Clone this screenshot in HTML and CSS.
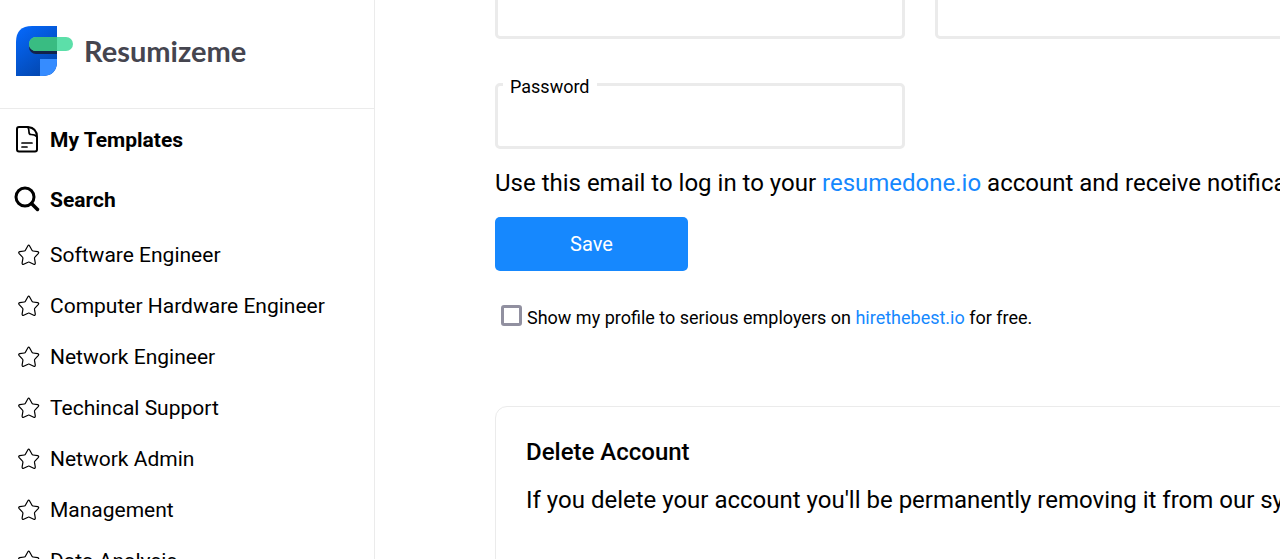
FILE: index.html
```html
<!DOCTYPE html>
<html lang="en">
<head>
<meta charset="utf-8">
<title>Resumizeme</title>
<link rel="stylesheet" href="styles.css">
</head>
<body>
<svg class="defs" width="0" height="0" aria-hidden="true">
  <symbol id="star" viewBox="0 0 22 22">
    <path d="M9.900 1.800Q10.700 .4 11.500 1.800L14 6.300Q14.300 6.900 15 7L19.700 7.700Q21.400 8.200 20.200 9.600L16.900 13.200Q16.400 13.700 16.500 14.400L17.300 19.100Q17.300 20.800 15.700 20.200L11.500 18.200Q10.700 17.800 10 18.200L5.700 20.200Q4.100 20.800 4.100 19.100L4.900 14.400Q5 13.700 4.500 13.200L1.200 9.600Q0 8.200 1.700 7.700L6.400 7Q7.100 6.900 7.400 6.300Z" fill="none" stroke="#000" stroke-width="1.200"/>
  </symbol>
</svg>
<div class="layout">
  <aside class="sidebar">
    <a class="brand" href="#">
      <svg class="brand-mark" viewBox="0 0 60 52" aria-hidden="true">
        <defs><linearGradient id="blue" x1="0.1" y1="0" x2="0.7" y2="1"><stop offset="0" stop-color="#0568fb"/><stop offset="1" stop-color="#0346ad"/></linearGradient></defs>
        <path d="M1 51V17Q1 1 17 1H42V36Q42 51 27 51Z" fill="url(#blue)"/>
        <path d="M25 34H42V36Q42 51 27 51H25Z" fill="#368cff"/>
        <path d="M42 15H21A7 7 0 0 0 21 29H42Z" fill="#12234a"/>
        <rect x="14" y="12" width="44" height="14" rx="7" fill="#5cdfa9"/>
        <path d="M42 12H21A7 7 0 0 0 21 26H42Z" fill="#39bc82"/>
      </svg>
      <span>Resumizeme</span>
    </a>
    <nav class="menu">
      <a class="item main-item" href="#">
        <svg class="icon" viewBox="0 0 26 28" aria-hidden="true"><g fill="none" stroke="#000" stroke-width="2" stroke-linecap="round" stroke-linejoin="round"><path d="M5 1H14Q23 2 23 11V23.500Q23 25.500 21 25.500H5Q3 25.500 3 23.500V3Q3 1 5 1Z"/><path d="M14 1.500Q15 3 15 6Q15 8.500 17 8.500Q21 8.500 22.500 10.500M8 17H18M8 21H13" stroke-width="1.700"/></g></svg>
        <span>My Templates</span>
      </a>
      <a class="item main-item" href="#">
        <svg class="icon" viewBox="0 0 26 28" aria-hidden="true"><g fill="none" stroke="#000" stroke-width="3"><circle cx="11" cy="11" r="9"/><path d="M17.500 17.500L23.500 23.500" stroke-width="3.500" stroke-linecap="round"/></g></svg>
        <span>Search</span>
      </a>
      <a class="item" href="#"><svg class="star"><use href="#star"/></svg><span>Software Engineer</span></a>
      <a class="item" href="#"><svg class="star"><use href="#star"/></svg><span>Computer Hardware Engineer</span></a>
      <a class="item" href="#"><svg class="star"><use href="#star"/></svg><span>Network Engineer</span></a>
      <a class="item" href="#"><svg class="star"><use href="#star"/></svg><span>Techincal Support</span></a>
      <a class="item" href="#"><svg class="star"><use href="#star"/></svg><span>Network Admin</span></a>
      <a class="item" href="#"><svg class="star"><use href="#star"/></svg><span>Management</span></a>
      <a class="item" href="#"><svg class="star"><use href="#star"/></svg><span>Data Analysis</span></a>
    </nav>
  </aside>
  <main class="content">
    <form class="account">
      <div class="fields">
        <input class="input" type="text" aria-label="Last name">
        <input class="input" type="email" aria-label="Email">
        <div class="field">
          <label class="field-label" for="password">Password</label>
          <input class="input" id="password" type="password">
        </div>
      </div>
      <p class="text hint">Use this email to log in to your <a class="link" href="#">resumedone.io</a> account and receive notifications.</p>
      <button class="save" type="button">Save</button>
      <div class="consent">
        <input class="check" id="show" type="checkbox">
        <label for="show">Show my profile to serious employers on <a class="link" href="#">hirethebest.io</a> for free.</label>
      </div>
    </form>
    <section class="card">
      <h2 class="card-title">Delete Account</h2>
      <p class="text">If you delete your account you'll be permanently removing it from our system.</p>
    </section>
  </main>
</div>
</body>
</html>
```
FILE: styles.css
```css
* { box-sizing: border-box; }
body {
  margin: 0;
  height: 100vh;
  overflow: hidden;
  background: #fff;
  color: #000;
  font-family: Roboto, sans-serif;
}
a { color: inherit; text-decoration: none; }
.defs { position: absolute; }
.layout { display: flex; min-height: 100vh; }
.sidebar {
  flex: 0 0 375px;
  border-right: 1px solid #ebebeb;
}
.brand {
  display: flex;
  align-items: center;
  gap: 9px;
  padding: 25px 15px 31px;
  border-bottom: 1px solid #ebebeb;
  color: #45454f;
  font: 700 29px/52px Lato, sans-serif;
}
.brand-mark { width: 60px; height: 52px; }
.menu { padding-top: 1px; }
.item {
  display: flex;
  align-items: center;
  gap: 10px;
  height: 51px;
  padding: 0 0 2px 18px;
  font-size: 21px;
}
.main-item {
  height: 60px;
  padding: 0 0 0 14px;
  font-weight: 700;
}
.icon { width: 26px; height: 28px; }
.star { width: 22px; height: 22px; }
.content {
  flex: 1;
  min-width: 0;
  padding-left: 120px;
}
.fields {
  display: grid;
  grid-template-columns: 410px 410px;
  gap: 44px 30px;
  margin-top: -27px;
}
.field { position: relative; }
.input {
  display: block;
  width: 100%;
  height: 66px;
  padding: 0 16px;
  border: 3px solid #ebebeb;
  border-radius: 5px;
  background: #fff;
  font: 20px Roboto, sans-serif;
}
.field-label {
  position: absolute;
  top: -8px;
  left: 8px;
  padding: 0 7px;
  background: #fff;
  font-size: 18px;
  line-height: 24px;
}
.text {
  margin: 0;
  font-size: 24px;
  line-height: 36px;
  white-space: nowrap;
}
.hint { margin: 16px 0; }
.link { color: #1688fe; }
.save {
  display: block;
  width: 193px;
  height: 54px;
  border: 0;
  border-radius: 5px;
  background: #1688fe;
  color: #fff;
  font: 20px Roboto, sans-serif;
}
.consent {
  display: flex;
  align-items: center;
  gap: 5px;
  margin: 34px 0 0 6px;
  font-size: 18px;
  line-height: 26px;
}
.check {
  appearance: none;
  width: 21px;
  height: 21px;
  margin: 0 0 5px;
  border: 3px solid #9190a0;
  border-radius: 3px;
}
.card {
  width: 850px;
  margin-top: 75px;
  padding: 27px 30px 60px;
  border: 1px solid #ebebeb;
  border-radius: 12px;
}
.card-title {
  margin: 0 0 12px;
  font-size: 24px;
  font-weight: 500;
  line-height: 36px;
}
```
